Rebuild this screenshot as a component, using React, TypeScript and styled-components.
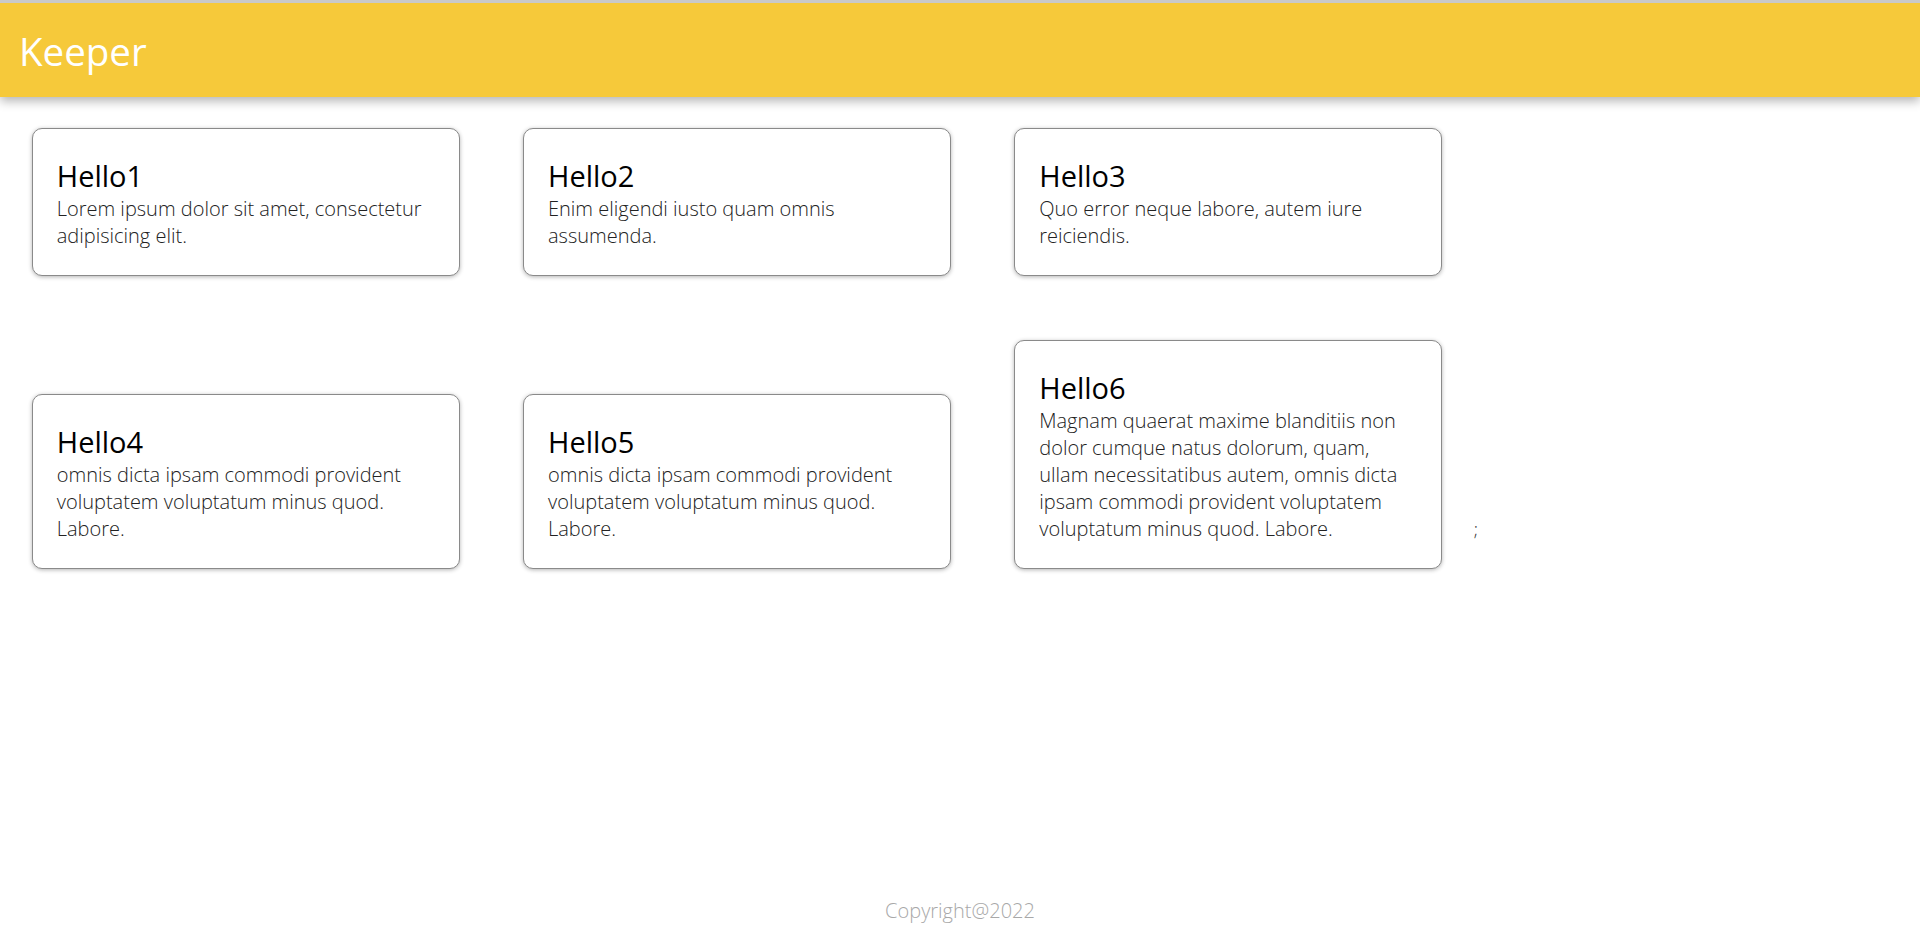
import React from "react";
import styled, { createGlobalStyle } from "styled-components";

const GlobalStyle = createGlobalStyle`
  html, body {
    margin: 0;
    padding: 0;
    background: #ffffff;
  }
  body {
    font-family: "Open Sans", "Noto Sans", sans-serif;
  }
  * {
    box-sizing: border-box;
  }
`;

const Page = styled.div`
  min-height: 100vh;
  display: flex;
  flex-direction: column;
  padding-top: 3px;
`;

const Header = styled.header`
  height: 93.5px;
  background: #f6c93a;
  padding: 21px 19px 0;
  box-shadow: 0 -3px 0 #c9c9c9, 0 4px 10px rgba(0, 0, 0, 0.3);
  position: relative;
  z-index: 1;
`;

const Title = styled.h1`
  margin: 0;
  color: #ffffff;
  font-family: "Open Sans", sans-serif;
  font-weight: 400;
  font-size: 38.5px;
  line-height: 54px;
`;

const Notes = styled.main`
  font-family: "Open Sans", sans-serif;
  font-weight: 300;
  font-size: 18px;
  color: #333333;
`;

const Note = styled.div`
  display: inline-block;
  vertical-align: baseline;
  width: 427.75px;
  margin: 31.75px;
  padding: 27px 24px 26px;
  background: #ffffff;
  border: 1px solid #8a8a8a;
  border-radius: 10px;
  box-shadow: 0 1px 4px rgba(0, 0, 0, 0.3);
`;

const NoteTitle = styled.h2`
  margin: 0;
  font-weight: 400;
  font-size: 29px;
  line-height: 39px;
  color: #000000;
`;

const NoteBody = styled.p`
  margin: 0;
  font-weight: 300;
  font-size: 20px;
  line-height: 27px;
  color: #222222;
`;

const Footer = styled.footer`
  margin-top: auto;
  text-align: center;
  padding-bottom: 6px;
`;

const Copyright = styled.p`
  margin: 0;
  font-family: "Open Sans", sans-serif;
  font-weight: 300;
  font-size: 20px;
  line-height: 27px;
  color: #a8a8a8;
`;

const notes = [
  { title: "Hello1", content: "Lorem ipsum dolor sit amet, consectetur adipisicing elit." },
  { title: "Hello2", content: "Enim eligendi iusto quam omnis assumenda." },
  { title: "Hello3", content: "Quo error neque labore, autem iure reiciendis." },
  {
    title: "Hello4",
    content: "omnis dicta ipsam commodi provident voluptatem voluptatum minus quod. Labore.",
  },
  {
    title: "Hello5",
    content: "omnis dicta ipsam commodi provident voluptatem voluptatum minus quod. Labore.",
  },
  {
    title: "Hello6",
    content:
      "Magnam quaerat maxime blanditiis non dolor cumque natus dolorum, quam, ullam necessitatibus autem, omnis dicta ipsam commodi provident voluptatem voluptatum minus quod. Labore.",
  },
];

export default function App() {
  return (
    <Page>
      <GlobalStyle />
      <Header>
        <Title>Keeper</Title>
      </Header>
      <Notes>
        {notes.map((n) => (
          <Note key={n.title}>
            <NoteTitle>{n.title}</NoteTitle>
            <NoteBody>{n.content}</NoteBody>
          </Note>
        ))}
        ;
      </Notes>
      <Footer>
        <Copyright>Copyright@2022</Copyright>
      </Footer>
    </Page>
  );
}
